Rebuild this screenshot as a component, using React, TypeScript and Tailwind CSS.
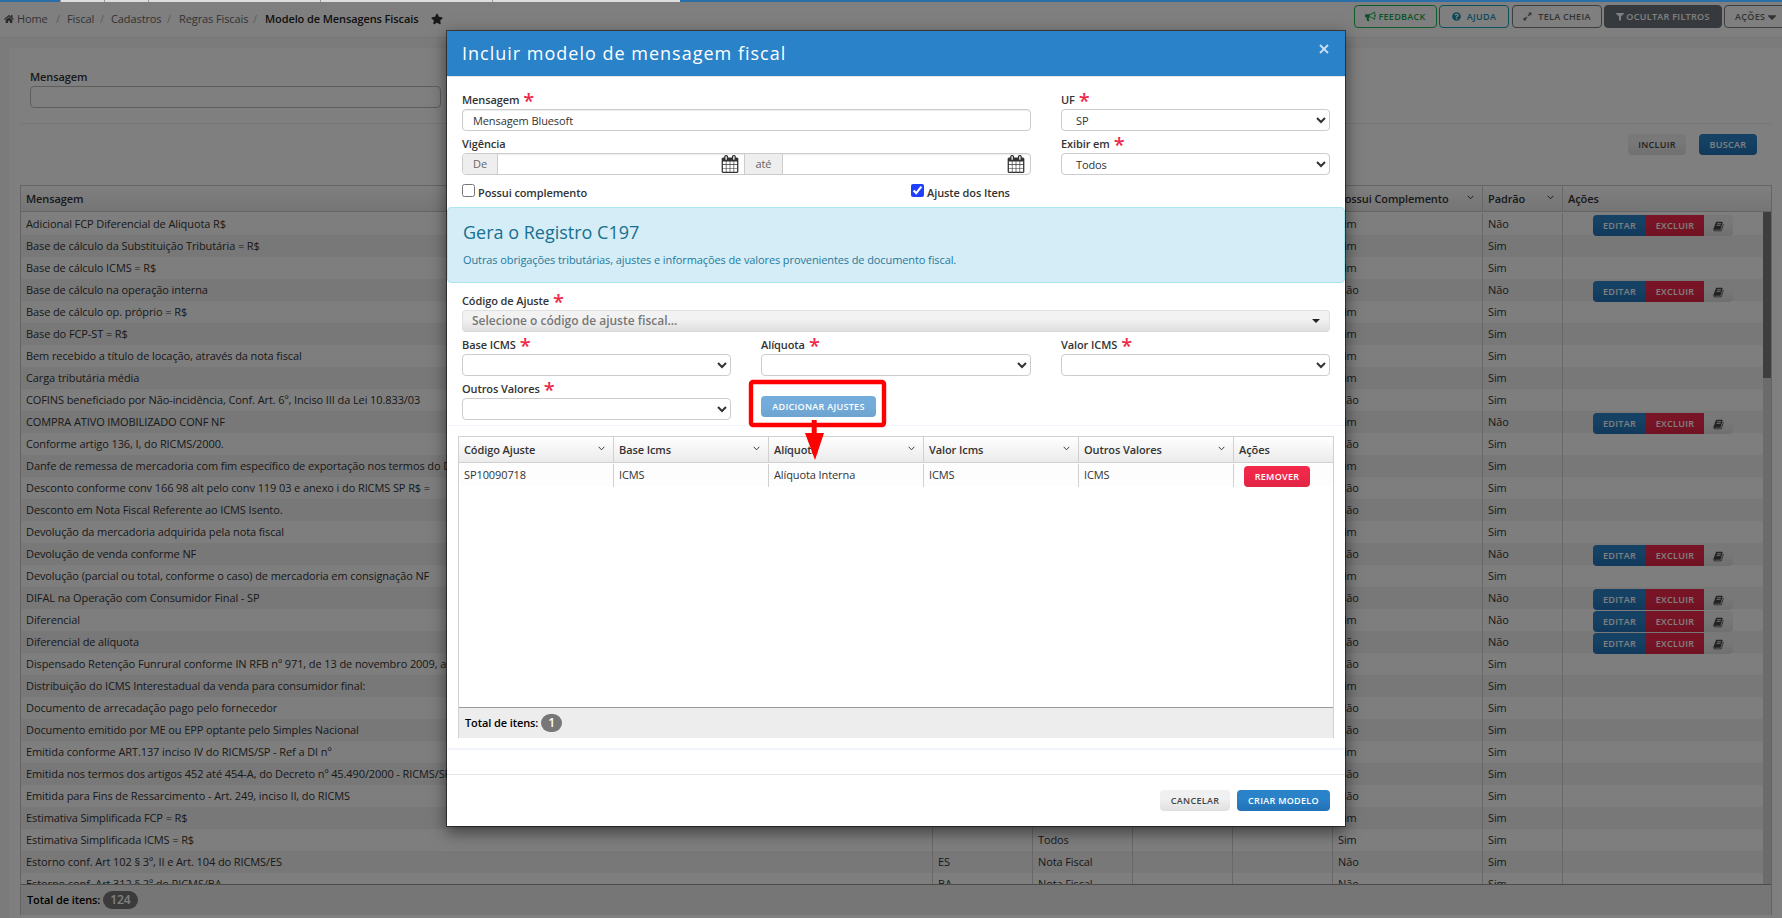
import { ReactNode } from 'react';
import { FaCaretDown, FaExpandAlt, FaFilter, FaHome, FaQuestionCircle, FaStar } from 'react-icons/fa';

type Message = {
  text: string;
  complement: string;
  standard: string;
  uf?: string;
  showIn?: string;
};

const messages: Message[] = [
  { text: 'Adicional FCP Diferencial de Aliquota R$', complement: 'Sim', standard: 'Não' },
  { text: 'Base de cálculo da Substituição Tributária = R$', complement: 'Sim', standard: 'Sim' },
  { text: 'Base de cálculo ICMS = R$', complement: 'Sim', standard: 'Sim' },
  { text: 'Base de cálculo na operação interna', complement: 'Não', standard: 'Não' },
  { text: 'Base de cálculo op. próprio = R$', complement: 'Sim', standard: 'Sim' },
  { text: 'Base do FCP-ST = R$', complement: 'Sim', standard: 'Sim' },
  { text: 'Bem recebido a título de locação, através da nota fiscal', complement: 'Sim', standard: 'Sim' },
  { text: 'Carga tributária média', complement: 'Sim', standard: 'Sim' },
  { text: 'COFINS beneficiado por Não-incidência, Conf. Art. 6º, Inciso III da Lei 10.833/03', complement: 'Não', standard: 'Sim' },
  { text: 'COMPRA ATIVO IMOBILIZADO CONF NF', complement: 'Sim', standard: 'Não' },
  { text: 'Conforme artigo 136, I, do RICMS/2000.', complement: 'Não', standard: 'Sim' },
  { text: 'Danfe de remessa de mercadoria com fim específico de exportação nos termos do D', complement: 'Sim', standard: 'Sim' },
  { text: 'Desconto conforme conv 166 98 alt pelo conv 119 03 e anexo i do RICMS SP R$ =', complement: 'Não', standard: 'Sim' },
  { text: 'Desconto em Nota Fiscal Referente ao ICMS Isento.', complement: 'Não', standard: 'Sim' },
  { text: 'Devolução da mercadoria adquirida pela nota fiscal', complement: 'Sim', standard: 'Sim' },
  { text: 'Devolução de venda conforme NF', complement: 'Não', standard: 'Não' },
  { text: 'Devolução (parcial ou total, conforme o caso) de mercadoria em consignação NF', complement: 'Sim', standard: 'Sim' },
  { text: 'DIFAL na Operação com Consumidor Final - SP', complement: 'Não', standard: 'Não' },
  { text: 'Diferencial', complement: 'Sim', standard: 'Não' },
  { text: 'Diferencial de alíquota', complement: 'Não', standard: 'Não' },
  { text: 'Dispensado Retenção Funrural conforme IN RFB nº 971, de 13 de novembro 2009, a', complement: 'Não', standard: 'Sim' },
  { text: 'Distribuição do ICMS Interestadual da venda para consumidor final:', complement: 'Sim', standard: 'Sim' },
  { text: 'Documento de arrecadação pago pelo fornecedor', complement: 'Não', standard: 'Sim' },
  { text: 'Documento emitido por ME ou EPP optante pelo Simples Nacional', complement: 'Não', standard: 'Sim' },
  { text: 'Emitida conforme ART.137 inciso IV do RICMS/SP - Ref a DI nº', complement: 'Sim', standard: 'Sim' },
  { text: 'Emitida nos termos dos artigos 452 até 454-A, do Decreto nº 45.490/2000 - RICMS/SP', complement: 'Não', standard: 'Sim' },
  { text: 'Emitida para Fins de Ressarcimento - Art. 249, inciso II, do RICMS', complement: 'Não', standard: 'Sim' },
  { text: 'Estimativa Simplificada FCP = R$', complement: 'Sim', standard: 'Sim' },
  { text: 'Estimativa Simplificada ICMS = R$', complement: 'Sim', standard: 'Sim', showIn: 'Todos' },
  { text: 'Estorno conf. Art 102 § 3º, II e Art. 104 do RICMS/ES', complement: 'Não', standard: 'Sim', uf: 'ES', showIn: 'Nota Fiscal' },
  { text: 'Estorno conf. Art 312 § 2º do RICMS/BA', complement: 'Não', standard: 'Sim', uf: 'BA', showIn: 'Nota Fiscal' },
];

const Bullhorn = () => (
  <svg viewBox="0 0 1792 1792" className="h-[11px] w-[11px] fill-current">
    <path d="M1664 640q53 0 90.5 37.5t37.5 90.5-37.5 90.5-90.5 37.5v384q0 52-38 90t-90 38q-417-347-812-380-58 19-91 66t-31 100.5 40 92.5q-20 33-23 65.5t6 58 33.5 55 48 50 61.5 50.5q-29 58-111.5 83t-168.5 11.5-132-55.5q-7-23-29.5-87.5t-32-94.5-23-89-15-101 3.5-98.5 22-110.5h-122q-66 0-113-47t-47-113v-192q0-66 47-113t113-47h480q435 0 896-384 52 0 90 38t38 90v384zm-128 604v-954q-394 302-768 343v270q377 42 768 341z" />
  </svg>
);

const Book = () => (
  <svg viewBox="0 0 1792 1792" className="h-[11px] w-[11px] fill-current">
    <path d="M1703 478q40 57 18 129l-275 906q-19 64-76.5 107.5t-122.5 43.5h-923q-77 0-148.5-53.5t-99.5-131.5q-24-67-2-127 0-4 3-27t4-37q1-8-3-21.5t-3-19.5q2-11 8-21t16.5-23.5 16.5-23.5q23-38 45-91.5t30-91.5q3-10 .5-30t-.5-28q3-11 17-28t17-23q21-36 42-92t25-90q1-9-2.5-32t.5-28q4-13 22-30.5t22-22.5q19-26 42.5-84.5t27.5-96.5q1-8-3-25.5t-2-26.5q2-8 9-18t18-23 17-21q8-12 16.5-30.5t15-35 16-36 19.5-32 26.5-23.5 36-11.5 47.5 5.5l-1 3q38-9 51-9h761q74 0 114 56t18 130l-274 906q-36 119-71.5 153.5t-128.5 34.5h-869q-27 0-38 15-11 16-1 43 24 70 144 70h923q29 0 56-15.5t35-41.5l300-987q7-22 5-57 38 15 59 43zm-1064 2q-4 13 2 22.5t20 9.5h608q13 0 25.5-9.5t16.5-22.5l21-64q4-13-2-22.5t-20-9.5h-608q-13 0-25.5 9.5t-16.5 22.5zm-83 256q-4 13 2 22.5t20 9.5h608q13 0 25.5-9.5t16.5-22.5l21-64q4-13-2-22.5t-20-9.5h-608q-13 0-25.5 9.5t-16.5 22.5z" />
  </svg>
);

const Calendar = () => (
  <svg viewBox="0 0 1792 1792" className="h-[18px] w-[18px] fill-[#333]">
    <path d="M192 1664h288v-288h-288v288zM544 1664h320v-288h-320v288zM192 1312h288v-320h-288v320zM544 1312h320v-320h-320v320zM192 928h288v-288h-288v288zM928 1664h320v-288h-320v288zM544 928h320v-288h-320v288zM1312 1664h288v-288h-288v288zM928 1312h320v-320h-320v320zM576 448v-288q0-13-9.5-22.5t-22.5-9.5h-64q-13 0-22.5 9.5t-9.5 22.5v288q0 13 9.5 22.5t22.5 9.5h64q13 0 22.5-9.5t9.5-22.5zM1312 1312h288v-320h-288v320zM928 928h320v-288h-320v288zM1312 928h288v-288h-288v288zM1344 448v-288q0-13-9.5-22.5t-22.5-9.5h-64q-13 0-22.5 9.5t-9.5 22.5v288q0 13 9.5 22.5t22.5 9.5h64q13 0 22.5-9.5t9.5-22.5zM1728 384v1280q0 52-38 90t-90 38h-1408q-52 0-90-38t-38-90v-1280q0-52 38-90t90-38h128v-96q0-66 47-113t113-47h64q66 0 113 47t47 113v96h384v-96q0-66 47-113t113-47h64q66 0 113 47t47 113v96h128q52 0 90 38t38 90z" />
  </svg>
);

const Chevron = () => (
  <svg viewBox="0 0 8 5" className="mb-1 h-[5px] w-[7px] fill-none stroke-[#333]">
    <path d="M0.8 0.6 L4 4 L7.2 0.6" strokeWidth="1.1" />
  </svg>
);

const buttonBase = 'flex h-[21px] items-center justify-center pt-px text-[9px] font-semibold tracking-[0.3px]';
const blueButton = 'bg-linear-to-b from-[#2a82c9] from-40% to-[#2272b6] text-white';
const redButton = 'bg-linear-to-b from-[#f0284a] from-40% to-[#e02444] text-white';
const grayButton = 'bg-linear-to-b from-[#f0f0f0] from-40% to-[#e0e0e0] text-[#444]';

const headerCell = 'flex items-center justify-between border-r border-[#d0d0d0] pl-[5px] pr-2 pt-px';

const TopBar = () => (
  <div className="flex h-[36px] items-start justify-between border-b border-[#eaeaea] bg-white">
    <div className="flex h-[34px] items-center pl-1 text-[11px] text-[#666]">
      <FaHome className="mr-[3px] h-[10px] w-[10px] text-[#555]" />
      <span className="w-[39px]">Home</span>
      <span className="w-[11px] text-[#bbb]">/</span>
      <span className="w-[33px]">Fiscal</span>
      <span className="w-[11px] text-[#bbb]">/</span>
      <span className="w-[56px]">Cadastros</span>
      <span className="w-[12px] text-[#bbb]">/</span>
      <span className="w-[74px]">Regras Fiscais</span>
      <span className="w-[12px] text-[#bbb]">/</span>
      <span className="w-[166px] font-semibold text-[#222]">Modelo de Mensagens Fiscais</span>
      <FaStar className="h-[12px] w-[12px] text-[#333]" />
    </div>
    <div className="-mr-3 flex pt-[3px] text-[9px] font-semibold tracking-[0.3px]">
      <button className="mr-[2px] flex h-[23px] w-[83px] items-center justify-center gap-[2px] rounded border border-[#1db954] text-[#12a84a]">
        <Bullhorn /> FEEDBACK
      </button>
      <button className="mr-[3px] flex h-[23px] w-[70px] items-center justify-center gap-[6px] rounded border border-[#17a2b8] text-[#1592b5]">
        <FaQuestionCircle className="h-[9px] w-[9px]" /> AJUDA
      </button>
      <button className="mr-[2px] flex h-[23px] w-[90px] items-center justify-center gap-[6px] rounded border border-[#7a7a7a] text-[#666]">
        <FaExpandAlt className="h-[9px] w-[9px]" /> TELA CHEIA
      </button>
      <button className="mr-[2px] flex h-[23px] w-[118px] items-center justify-center gap-[2px] rounded border border-[#6c757d] bg-[#6c757d] text-white">
        <FaFilter className="h-[8px] w-[8px]" /> OCULTAR FILTROS
      </button>
      <button className="flex h-[23px] w-[70px] items-center gap-[2px] rounded border border-[#7a7a7a] pl-[10px] text-[#666]">
        AÇÕES <FaCaretDown className="h-[14px] w-[10px]" />
      </button>
    </div>
  </div>
);

const RowActions = () => (
  <div className="relative flex pl-[30px] pt-[2px]">
    <button className={`${buttonBase} ${blueButton} w-[53px] rounded-l`}>EDITAR</button>
    <button className={`${buttonBase} ${redButton} w-[58px]`}>EXCLUIR</button>
    <button className={`${buttonBase} ${grayButton} w-[29px] rounded-r`}>
      <Book />
    </button>
  </div>
);

const cell = 'border-r border-[#d0d0d0] pl-[5px] leading-[22px] whitespace-nowrap overflow-hidden';

const MessagesTable = () => (
  <div className="flex h-[730px] w-[1752px] flex-col border border-b-0 border-[#c8c8c8]">
    <div className="grid h-[26px] shrink-0 grid-cols-[912px_100px_100px_100px_100px_150px_80px_1fr] border-b border-[#c8c8c8] bg-linear-to-b from-white to-[#ebebeb] text-[11px] font-semibold">
      <div className={headerCell}>Mensagem</div>
      <div className={headerCell} />
      <div className={headerCell} />
      <div className={headerCell} />
      <div className={headerCell} />
      <div className={headerCell}>Possui Complemento <Chevron /></div>
      <div className={headerCell}>Padrão <Chevron /></div>
      <div className="flex items-center pl-[5px] pt-px">Ações</div>
    </div>
    <div className="flex h-[673px] shrink-0 border-b border-[#999]">
      <div className="h-full grow overflow-hidden pt-px">
        {messages.map((message, i) => (
          <div
            key={message.text}
            className={`grid h-[22px] grid-cols-[912px_100px_100px_100px_100px_150px_80px_1fr] text-[11px] ${i % 2 ? 'bg-[#f0f0f0]' : 'bg-[#fdfdfd]'}`}
          >
            <div className={cell}>{message.text}</div>
            <div className={cell}>{message.uf}</div>
            <div className={cell}>{message.showIn}</div>
            <div className={cell} />
            <div className={cell} />
            <div className={cell}>{message.complement}</div>
            <div className={cell}>{message.standard}</div>
            <div>{message.standard === 'Não' && <RowActions />}</div>
          </div>
        ))}
      </div>
      <div className="w-2 bg-[#d6d6d6]">
        <div className="h-[166px] bg-[#7d7d7d]" />
      </div>
    </div>
    <div className="flex grow items-center gap-[3px] bg-[#ededed] pl-[6px] text-[11px] font-semibold text-black">
      Total de itens:
      <span className="rounded-full bg-[#777] px-[7px] text-[12px] leading-[18px] text-white">124</span>
    </div>
  </div>
);

const Label = ({ children, required }: { children: ReactNode; required?: boolean }) => (
  <label className="flex h-[18px] items-center text-[11px] font-semibold">
    {children}
    {required && <span className="ml-1 h-[18px] text-[20px] leading-[19px] font-semibold text-[#f0284a]">*</span>}
  </label>
);

const Select = ({ label, value = '' }: { label: string; value?: string }) => (
  <div className="h-11">
    <Label required>{label}</Label>
    <select className="block h-[22px] w-full rounded border border-[#ccc] bg-white pl-[10px] text-[11px]">
      <option>{value}</option>
    </select>
  </div>
);

const dateInput = 'flex items-center justify-end border-r border-[#ccc] pr-[5px]';
const dateAddon = 'flex items-center justify-center border-r border-[#ccc] bg-[#eee] text-[11px] text-[#666]';

const columns = ['Código Ajuste', 'Base Icms', 'Alíquota', 'Valor Icms', 'Outros Valores'];
const values = ['SP10090718', 'ICMS', 'Alíquota Interna', 'ICMS', 'ICMS'];

const AdjustmentsTable = () => (
  <div className="flex h-[302px] flex-col border border-b-0 border-[#d0d0d0]">
    <div className="grid h-[26px] grid-cols-[155px_155px_155px_155px_155px_1fr] border-b border-[#d0d0d0] bg-linear-to-b from-white to-[#ebebeb] text-[11px] font-semibold">
      {columns.map((column) => (
        <div key={column} className={headerCell}>{column} <Chevron /></div>
      ))}
      <div className="flex items-center pl-[5px] pt-px">Ações</div>
    </div>
    <div className="h-[245px] border-b border-[#999] pt-px">
      <div className="grid h-[22px] grid-cols-[155px_155px_155px_155px_155px_1fr] bg-[#fdfdfd] text-[11px]">
        {values.map((value, i) => (
          <div key={i} className={cell}>{value}</div>
        ))}
        <div className="pl-[10px] pt-[2px]">
          <button className={`${buttonBase} ${redButton} w-[66px] rounded`}>REMOVER</button>
        </div>
      </div>
    </div>
    <div className="flex grow items-center gap-[3px] bg-[#ededed] pl-[6px] text-[11px] font-semibold text-black">
      Total de itens:
      <span className="rounded-full bg-[#777] px-[7px] text-[12px] leading-[18px] text-white">1</span>
    </div>
  </div>
);

const Modal = () => (
  <div className="absolute left-[446px] top-[30px] z-20 flex h-[797px] w-[900px] flex-col border border-black/50 bg-white bg-clip-padding shadow-[0_5px_15px_rgba(0,0,0,0.5)]">
    <div className="flex h-[46px] shrink-0 justify-between border-b border-[#e5e5e5] bg-[#2a82c9] pl-[15px] pr-[16px] text-white">
      <h4 className="text-[18px] leading-[44px] tracking-[1px]">Incluir modelo de mensagem fiscal</h4>
      <svg viewBox="0 0 10 10" className="mt-[13px] h-[10px] w-[10px] stroke-white/75">
        <path d="M1 1 L9 9 M9 1 L1 9" strokeWidth="1.8" />
      </svg>
    </div>

    <div className="px-[15px] pt-[14px]">
      <div className="grid grid-cols-[569px_269px] gap-x-[30px]">
        <div className="h-11">
          <Label required>Mensagem</Label>
          <input
            className="block h-[22px] w-full rounded border border-[#ccc] px-[10px] text-[11px] tracking-[-0.1px] shadow-[inset_0_1px_1px_rgba(0,0,0,0.075)]"
            defaultValue="Mensagem Bluesoft"
          />
        </div>
        <Select label="UF" value="SP" />
        <div className="h-11">
          <Label>Vigência</Label>
          <div className="grid h-[22px] grid-cols-[35px_247px_38px_1fr] overflow-hidden rounded border border-[#ccc] shadow-[inset_0_1px_1px_rgba(0,0,0,0.075)]">
            <span className={dateAddon}>De</span>
            <div className={dateInput}><Calendar /></div>
            <span className={dateAddon}>até</span>
            <div className="flex items-center justify-end pr-[5px]"><Calendar /></div>
          </div>
        </div>
        <Select label="Exibir em" value="Todos" />
      </div>
      <div className="grid h-[28px] grid-cols-[449px_1fr] pt-[5px] text-[11px] font-semibold">
        <label className="flex h-[18px] gap-[3px] leading-[18px]">
          <input type="checkbox" className="h-[13px] w-[13px]" />
          Possui complemento
        </label>
        <label className="flex h-[18px] gap-[3px] leading-[18px]">
          <input type="checkbox" defaultChecked className="h-[13px] w-[13px] accent-[#1d3fff]" />
          Ajuste dos Itens
        </label>
      </div>
    </div>

    <div className="h-[76px] shrink-0 rounded border border-[#ace6ee] bg-[#d5edf7] pl-[15px] text-[#1f7a9c]">
      <h4 className="pt-[12px] text-[18px] leading-6 tracking-normal text-[#17708f]">Gera o Registro C197</h4>
      <p className="pt-[8px] text-[11px] leading-4">
        Outras obrigações tributárias, ajustes e informações de valores provenientes de documento fiscal.
      </p>
    </div>

    <div className="h-[142px] shrink-0 px-[15px] pt-[9px]">
      <div className="h-11">
        <Label required>Código de Ajuste</Label>
        <button className="flex h-[22px] w-full items-center justify-between rounded border border-b-[#d8d8d8] border-[#e0e0e0] bg-linear-to-b from-[#f2f2f2] from-40% to-[#e0e0e0] pl-[9px] pr-[9px] text-[12px] font-semibold tracking-normal text-[#777]">
          Selecione o código de ajuste fiscal...
          <span className="border-x-4 border-t-4 border-x-transparent border-t-[#222]" />
        </button>
      </div>
      <div className="grid grid-cols-[269px_270px_269px] gap-x-[30px]">
        <Select label="Base ICMS" />
        <Select label="Alíquota" />
        <Select label="Valor ICMS" />
        <Select label="Outros Valores" />
        <div className="pt-4">
          <button className={`${buttonBase} ${blueButton} w-[115px] rounded opacity-65`}>ADICIONAR AJUSTES</button>
        </div>
      </div>
    </div>

    <div className="h-[325px] shrink-0 rounded border-t border-b-2 border-[#f0f2fc] px-[11px] pt-[10px]">
      <AdjustmentsTable />
    </div>

    <div className="mt-6 flex grow justify-end gap-[7px] border-t border-[#e5e5e5] pr-[15px] pt-[15px]">
      <button className={`${buttonBase} ${grayButton} w-[70px] rounded`}>CANCELAR</button>
      <button className={`${buttonBase} ${blueButton} w-[93px] rounded`}>CRIAR MODELO</button>
    </div>

    {/* highlight around the add button, pointing at the new row */}
    <svg viewBox="0 0 140 84" className="pointer-events-none absolute left-[301px] top-[347px] h-[84px] w-[140px]">
      <rect x="3" y="4" width="133" height="43" rx="2" fill="none" stroke="#f00" strokeWidth="4.4" />
      <path d="M63.7 42 H68.7 V55 H76 L67 82 L57 55 H63.7 Z" fill="#f00" />
    </svg>
  </div>
);

const App = () => {
  return (
    <div className="relative h-[918px] w-[1782px] overflow-hidden bg-[#f7f7f7] font-['Open_Sans',sans-serif] tracking-[-0.1px] text-[#333]">
      <div className="relative z-30 flex h-[2px] bg-[#2a6fa8]">
        <div className="w-[61px] border-r border-[#999]" />
        <div className="w-[44px] border-r border-[#999] bg-[#ddd]" />
        <div className="w-[44px] border-r border-[#999] bg-[#ddd]" />
        <div className="w-[172px] border-r border-[#999] bg-[#ddd]" />
        <div className="w-[172px] border-r border-[#999] bg-[#ddd]" />
        <div className="w-[187px] bg-[#ddd]" />
      </div>
      <TopBar />
      <div className="ml-[9px] mt-[10px] h-[870px] bg-white pl-[11px] pt-5">
        <div className="h-[56px] w-[1752px] border-b border-[#eee] pl-[10px]">
          <div className="text-[11px] leading-[18px] font-semibold">Mensagem</div>
          <input className="block h-[22px] w-[411px] rounded border border-[#bbb]" />
        </div>
        <div className="flex h-[61px] w-[1752px] gap-[13px] justify-end pr-[15px] pt-[10px]">
          <button className={`${buttonBase} ${grayButton} w-[58px] rounded`}>INCLUIR</button>
          <button className={`${buttonBase} ${blueButton} w-[58px] rounded`}>BUSCAR</button>
        </div>
        <MessagesTable />
      </div>
      <div className="absolute inset-0 z-10 bg-black/50" />
      <Modal />
    </div>
  );
};

export default App;
